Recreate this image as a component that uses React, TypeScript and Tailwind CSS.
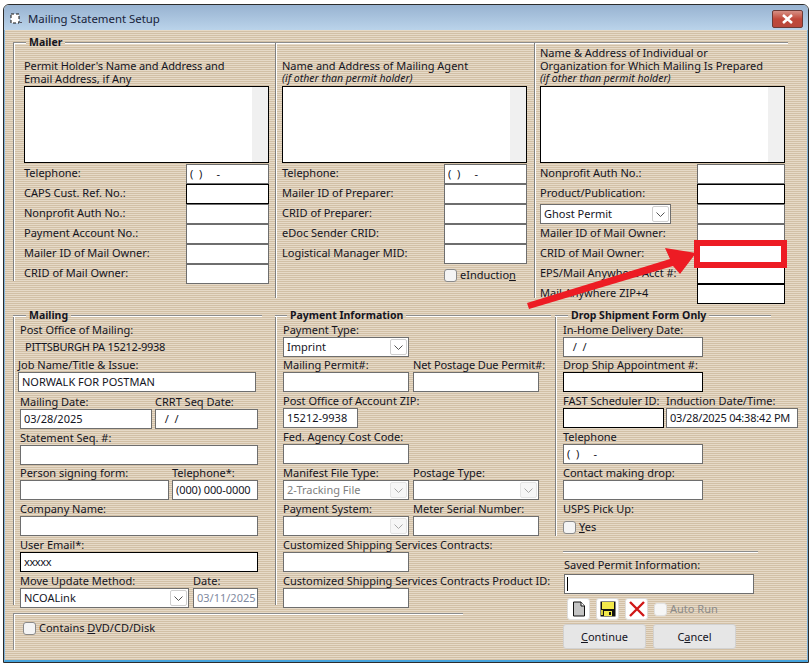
import React from 'react';

const Rule = ({ className = '' }: { className?: string }) => (
  <div className={`h-[2px] border-t border-[#8c8c8c] bg-white ${className}`} />
);

function Legend({ title, lead = 'w-[13px]', className = '' }: { title: string; lead?: string; className?: string }) {
  return (
    <div className={`flex h-[14px] items-center gap-[3px] ${className}`}>
      <Rule className={lead} />
      <span className="-mt-px whitespace-nowrap text-[10.5px] font-bold leading-[13px]">{title}</span>
      <Rule className="flex-1" />
    </div>
  );
}

function Label({ children, className = '' }: { children: React.ReactNode; className?: string }) {
  return <div className={`h-4 whitespace-nowrap pt-px leading-[15px] ${className}`}>{children}</div>;
}

function Input({ value = '', className = '', black = false, muted = false }: { value?: string; className?: string; black?: boolean; muted?: boolean }) {
  return (
    <input
      readOnly
      value={value}
      className={`block h-5 shrink-0 border bg-white pb-px pl-[3px] text-[11px] outline-none ${black ? 'border-black' : 'border-[#6e6e6e]'} ${muted ? 'text-[#7f8aa0]' : 'text-[#14141e]'} ${className}`}
    />
  );
}

function Select({ value = '', className = '', disabled = false }: { value?: string; className?: string; disabled?: boolean }) {
  return (
    <div className={`flex h-5 shrink-0 items-center justify-between border border-[#6e6e6e] bg-white pl-[3px] pr-px ${disabled ? 'text-[#808080]' : ''} ${className}`}>
      <span>{value}</span>
      <span className={`flex h-4 w-[17px] items-center justify-center rounded-[2px] border ${disabled ? 'border-[#e4e4e4] bg-[#f6f6f6]' : 'border-[#cfcfcf] bg-white'}`}>
        <svg width="9" height="5" viewBox="0 0 9 5" fill="none" stroke={disabled ? '#a8a8a8' : '#555'}>
          <path d="M0.5 0.5 4.5 4.5 8.5 0.5" />
        </svg>
      </span>
    </div>
  );
}

const Check = () => <span className="block h-[13px] w-[13px] shrink-0 rounded-[3px] border border-[#8a8a8a] bg-[#f4f4f4]" />;

function Memo() {
  return (
    <div className="flex h-[77px] w-[245px] justify-end border border-black bg-white">
      <div className="w-4 bg-[#f0f0f0]" />
    </div>
  );
}

function Row({ label, children }: { label: string; children?: React.ReactNode }) {
  return (
    <div className="flex h-5 w-[245px] items-center justify-between whitespace-nowrap">
      <span className="-mt-[2px]">{label}</span>
      {children}
    </div>
  );
}

const DocIcon = () => (
  <svg width="14" height="16" viewBox="0 0 14 16">
    <path d="M1.5 1H9L12.5 5V15H1.5Z" fill="#c4c4c4" stroke="#111" />
    <path d="M9 1V5H12.5" fill="#fff" stroke="#111" />
  </svg>
);

const SaveIcon = () => (
  <svg width="16" height="16" viewBox="0 0 16 16">
    <rect x="0.5" y="0.5" width="15" height="15" fill="#111" />
    <rect x="2" y="1" width="12" height="7" fill="#f2e84a" />
    <rect x="4" y="10" width="8" height="5" fill="#f2e84a" />
    <rect x="9" y="11" width="2" height="3" fill="#111" />
    <rect x="1" y="9" width="2" height="5" fill="#d8cf3a" />
  </svg>
);

const DeleteIcon = () => (
  <svg width="16" height="16" viewBox="0 0 16 16" fill="none" stroke="#d01818" strokeWidth="2.4">
    <path d="M1 1 15 15M15 1 1 15" />
  </svg>
);

const IconButton = ({ children }: { children: React.ReactNode }) => (
  <button className="flex h-[22px] w-[23px] items-center justify-center rounded-[3px] border border-[#dedede] bg-white">{children}</button>
);

const PushButton = ({ children }: { children: React.ReactNode }) => (
  <button className="h-[25px] w-[83px] rounded-[3px] border border-[#d2d2d2] bg-[#e6e6e6] pt-px text-[11px] text-[#14141e]">{children}</button>
);

export default function App() {
  return (
    <div className="relative h-[665px] w-[811px] overflow-hidden bg-white pl-[3px] pt-1 font-['Noto_Sans','Open_Sans',sans-serif] text-[11px] text-[#14141e]">
      <div className="flex h-[659px] w-[806px] flex-col overflow-hidden rounded-t-[6px] border border-[#2c2c2c]">
        {/* Title bar */}
        <div className="flex h-[25px] shrink-0 items-center bg-gradient-to-b from-[#98b3d1] to-[#bad3ea] pl-[6px] pr-[5px] pt-[2px]">
          <svg width="13" height="12" viewBox="0 0 13 12">
            <rect x="1" y="1" width="8" height="9" fill="#fff" stroke="#111" strokeDasharray="3 2" />
            <rect x="10" y="9" width="2" height="1" fill="#556" />
          </svg>
          <span className="ml-[5px] text-[11.4px] text-[#17233a]">Mailing Statement Setup</span>
          <div className="ml-auto flex h-[18px] w-[31px] items-center justify-center rounded-[2px] border border-[#6b3a36] bg-gradient-to-b from-[#d68f84] via-[#c0483a] to-[#b8483c]">
            <svg width="13" height="10" viewBox="0 0 13 10" fill="none" stroke="#fff" strokeWidth="2.6">
              <path d="M2 1 11 9M11 1 2 9" />
            </svg>
          </div>
        </div>

        {/* Form body */}
        <div className="flex-1 border-x border-b-2 border-x-[#7fb2d8] border-b-[#45a3dc] bg-[repeating-linear-gradient(to_bottom,#e6dac8_0,#e6dac8_1px,#d2c0a6_1px,#d2c0a6_2px)] pl-2 pt-[6px]">
          {/* Mailer */}
          <Legend title="Mailer" className="w-[775px]" />
          <div className="-mt-[7px] grid w-[775px] grid-cols-[262px_259px_254px] items-start">
            <div className="h-[238px] border-l border-[#808080] pl-[10px] shadow-[inset_1px_0_0_#fff]">
              <div className="mb-px flex h-[42px] flex-col justify-end leading-[13px]">
                <div className="tracking-[-0.1px]">Permit Holder's Name and Address and</div>
                <div>Email Address, if Any</div>
              </div>
              <Memo />
              <div className="mt-px">
                <Row label="Telephone:"><Input value="(  )     -" className="w-[83px]" /></Row>
                <Row label="CAPS Cust. Ref. No.:"><Input black className="w-[83px]" /></Row>
                <Row label="Nonprofit Auth No.:"><Input className="w-[83px]" /></Row>
                <Row label="Payment Account No.:"><Input className="w-[83px]" /></Row>
                <Row label="Mailer ID of Mail Owner:"><Input className="w-[83px]" /></Row>
                <Row label="CRID of Mail Owner:"><Input className="w-[83px]" /></Row>
              </div>
            </div>

            <div className="h-[255px] border-l border-[#808080] pl-[6px] shadow-[inset_1px_0_0_#fff]">
              <div className="mb-px flex h-[42px] flex-col justify-end leading-[13px]">
                <div>Name and Address of Mailing Agent</div>
                <div className="text-[10.5px] italic">(if other than permit holder)</div>
              </div>
              <Memo />
              <div className="mt-px">
                <Row label="Telephone:"><Input value="(  )     -" className="w-[83px]" /></Row>
                <Row label="Mailer ID of Preparer:"><Input className="w-[83px]" /></Row>
                <Row label="CRID of Preparer:"><Input className="w-[83px]" /></Row>
                <Row label="eDoc Sender CRID:"><Input className="w-[83px]" /></Row>
                <Row label="Logistical Manager MID:"><Input className="w-[83px]" /></Row>
              </div>
              <div className="ml-[162px] mt-[3px] flex items-center gap-[3px]">
                <Check />
                <span>eInductio<u>n</u></span>
              </div>
            </div>

            <div className="h-[255px] border-l border-[#808080] pl-[5px] shadow-[inset_1px_0_0_#fff]">
              <div className="mb-px flex h-[42px] flex-col justify-end whitespace-nowrap leading-[13px]">
                <div>Name &amp; Address of Individual or</div>
                <div>Organization for Which Mailing Is Prepared</div>
                <div className="text-[10.5px] italic">(if other than permit holder)</div>
              </div>
              <Memo />
              <div className="mt-px">
                <Row label="Nonprofit Auth No.:"><Input className="w-[88px]" /></Row>
                <Row label="Product/Publication:"><Input black className="w-[88px]" /></Row>
                <div className="flex h-5 w-[245px] justify-between">
                  <Select value="Ghost Permit" className="w-[131px]" />
                  <Input className="w-[88px]" />
                </div>
                <Row label="Mailer ID of Mail Owner:"><Input className="w-[88px]" /></Row>
                <Row label="CRID of Mail Owner:"><Input className="w-[88px]" /></Row>
                <Row label="EPS/Mail Anywhere Acct #:"><Input black className="w-[88px]" /></Row>
                <Row label="Mail Anywhere ZIP+4"><Input black className="w-[88px]" /></Row>
              </div>
            </div>
          </div>

          <div className="mt-[11px] flex">
            <div className="w-[542px] shrink-0">
              <div className="grid grid-cols-[262px_280px] items-start">
                {/* Mailing */}
                <div>
                  <Legend title="Mailing" className="w-[249px]" />
                  <div className="-mt-[8px] h-[290px] border-l border-[#808080] pl-[6px] pt-[7px] shadow-[inset_1px_0_0_#fff]">
                    <div className="h-4 whitespace-nowrap leading-4">Post Office of Mailing:</div>
                    <div className="h-[18px] pl-[5px] leading-[18px] tracking-[-0.25px]">PITTSBURGH PA 15212-9938</div>
                    <Label className="-ml-[2px]">Job Name/Title &amp; Issue:</Label>
                    <Input value="NORWALK FOR POSTMAN" className="-ml-[2px] w-[238px]" />
                    <div className="mt-px flex gap-[3px]">
                      <Label className="w-[132px]">Mailing Date:</Label>
                      <Label>CRRT Seq Date:</Label>
                    </div>
                    <div className="flex gap-[3px]">
                      <Input value="03/28/2025" className="w-[132px]" />
                      <Input value="  /  /" className="w-[103px]" />
                    </div>
                    <Label>Statement Seq. #:</Label>
                    <Input className="w-[238px]" />
                    <div className="-mt-px flex gap-[3px]">
                      <Label className="w-[149px]">Person signing form:</Label>
                      <Label>Telephone*:</Label>
                    </div>
                    <div className="flex gap-[3px]">
                      <Input className="w-[149px]" />
                      <Input value="(000) 000-0000" className="w-[86px] tracking-[-0.1px]" />
                    </div>
                    <Label>Company Name:</Label>
                    <Input className="w-[238px]" />
                    <Label>User Email*:</Label>
                    <Input black value="xxxxx" className="w-[238px] tracking-[-0.4px]" />
                    <div className="flex gap-1">
                      <Label className="w-[169px]">Move Update Method:</Label>
                      <Label>Date:</Label>
                    </div>
                    <div className="flex gap-1">
                      <Select value="NCOALink" className="w-[169px]" />
                      <Input muted value="03/11/2025" className="w-[65px]" />
                    </div>
                  </div>
                </div>

                {/* Payment Information */}
                <div>
                  <Legend title="Payment Information" lead="w-[12px]" className="w-[276px]" />
                  <div className="-mt-[8px] h-[290px] border-l border-[#808080] pl-[7px] pt-[6px] shadow-[inset_1px_0_0_#fff]">
                    <Label>Payment Type:</Label>
                    <Select value="Imprint" className="w-[126px]" />
                    <div className="-mt-px flex gap-1">
                      <Label className="w-[126px]">Mailing Permit#:</Label>
                      <Label className="tracking-[-0.1px]">Net Postage Due Permit#:</Label>
                    </div>
                    <div className="flex gap-1">
                      <Input className="w-[126px]" />
                      <Input className="w-[126px]" />
                    </div>
                    <Label>Post Office of Account ZIP:</Label>
                    <Input value="15212-9938" className="w-[75px]" />
                    <Label>Fed. Agency Cost Code:</Label>
                    <Input className="w-[126px]" />
                    <div className="flex gap-1">
                      <Label className="w-[126px]">Manifest File Type:</Label>
                      <Label>Postage Type:</Label>
                    </div>
                    <div className="flex gap-1">
                      <Select disabled value="2-Tracking File" className="w-[126px]" />
                      <Select disabled className="w-[126px]" />
                    </div>
                    <div className="flex gap-1">
                      <Label className="w-[126px]">Payment System:</Label>
                      <Label>Meter Serial Number:</Label>
                    </div>
                    <div className="flex gap-1">
                      <Select disabled className="w-[126px]" />
                      <Input className="w-[126px]" />
                    </div>
                    <Label>Customized Shipping Services Contracts:</Label>
                    <Input className="w-[126px]" />
                    <Label>Customized Shipping Services Contracts Product ID:</Label>
                    <Input className="w-[126px]" />
                  </div>
                </div>
              </div>

              {/* Contains DVD */}
              <div className="mt-2 h-[37px] w-[450px] border-l border-t border-[#8c8c8c] pl-[9px] pt-[6px] shadow-[inset_1px_1px_0_#fff]">
                <div className="flex items-center gap-[3px]">
                  <Check />
                  <span>Contains <u>D</u>VD/CD/Disk</span>
                </div>
              </div>
            </div>

            {/* Drop Shipment */}
            <div className="w-[243px]">
              <Legend title="Drop Shipment Form Only" className="w-[216px]" />
              <div className="-mt-[8px] h-[221px] border-l border-[#808080] pl-[7px] pt-[6px] shadow-[inset_1px_0_0_#fff]">
                <Label>In-Home Delivery Date:</Label>
                <Input value="  /  /" className="w-[140px]" />
                <Label className="-mt-px">Drop Ship Appointment #:</Label>
                <Input black className="w-[140px]" />
                <div className="flex gap-[2px]">
                  <Label className="w-[101px]">FAST Scheduler ID:</Label>
                  <Label>Induction Date/Time:</Label>
                </div>
                <div className="flex gap-[2px]">
                  <Input black className="w-[101px]" />
                  <Input value="03/28/2025 04:38:42 PM" className="w-[132px] tracking-[-0.2px]" />
                </div>
                <Label>Telephone</Label>
                <Input value="(  )     -" className="w-[140px]" />
                <Label>Contact making drop:</Label>
                <Input className="w-[140px]" />
                <Label>USPS Pick Up:</Label>
                <div className="mt-[3px] flex items-center gap-[3px]">
                  <Check />
                  <span><u>Y</u>es</span>
                </div>
              </div>
              <Rule className="ml-2 mt-[15px] w-[195px]" />
              <Label className="ml-[9px] mt-[3px]">Saved Permit Information:</Label>
              <div className="relative ml-[9px] mt-[2px] w-[190px]">
                <Input className="w-[190px]" />
                <span className="absolute left-[3px] top-[3px] h-[14px] w-px bg-black" />
              </div>
              <div className="ml-3 mt-[4px] flex items-center gap-[6px]">
                <IconButton><DocIcon /></IconButton>
                <IconButton><SaveIcon /></IconButton>
                <IconButton><DeleteIcon /></IconButton>
                <div className="flex items-center gap-[3px] text-[#8a8a8a]">
                  <span className="block h-[13px] w-[13px] rounded-[3px] border border-[#e0e0e0] bg-[#f6f6f6]" />
                  <span>Auto Run</span>
                </div>
              </div>
              <div className="ml-2 mt-1 flex gap-[7px]">
                <PushButton><u>C</u>ontinue</PushButton>
                <PushButton>C<u>a</u>ncel</PushButton>
              </div>
            </div>
          </div>
        </div>
      </div>

      {/* Annotation drawn over the form */}
      <div className="absolute left-[694px] top-[240px] h-[28px] w-[93px] border-[6px] border-[#ed1c24]" />
      <svg className="pointer-events-none absolute left-0 top-0" width="811" height="665">
        <path d="M527 303 670 259 665 248 696 253 680 274 673 266 529 309Z" fill="#ed1c24" />
      </svg>
    </div>
  );
}
